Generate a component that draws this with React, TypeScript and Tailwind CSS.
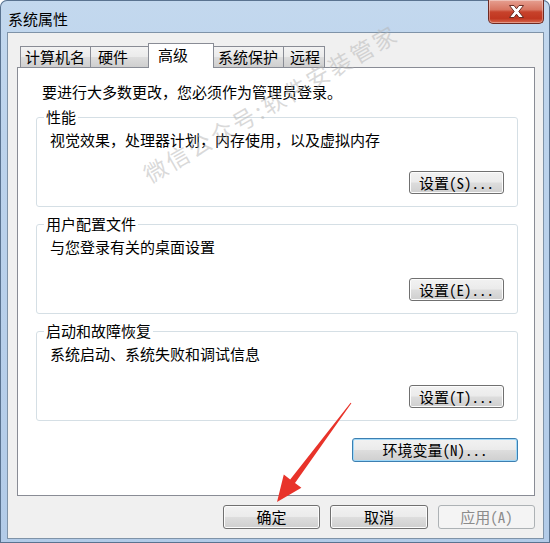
import type { ReactNode } from "react";

const font = "font-['Noto_Sans_Mono_CJK_SC','Noto_Sans_CJK_SC',sans-serif]";

type BtnProps = {
  children: ReactNode;
  className?: string;
  disabled?: boolean;
  focused?: boolean;
};

const WinButton = ({ children, className = "", disabled, focused }: BtnProps) => {
  let look =
    "border-[#707070] bg-[linear-gradient(180deg,#f2f2f2_0%,#ebebeb_48%,#dddddd_52%,#cfcfcf_100%)] shadow-[inset_0_0_0_1px_#fcfcfc] text-black";
  if (focused)
    look =
      "border-[#3c7fb1] bg-[linear-gradient(180deg,#f2f2f2_0%,#ebebeb_48%,#dddddd_52%,#cfcfcf_100%)] shadow-[inset_0_0_0_1px_#9fd8f8] text-black";
  if (disabled) look = "border-[#adb2b5] bg-[#f4f4f4] text-[#8b8b8b]";
  return (
    <button
      type="button"
      className={`flex shrink-0 items-center justify-center rounded-[3px] border text-[15px] leading-[20px] ${look} ${className}`}
    >
      {children}
    </button>
  );
};

type GroupProps = { title: string; desc: string; button: string; className?: string };

const Group = ({ title, desc, button, className = "" }: GroupProps) => (
  <fieldset className={`rounded-[3px] border border-[#d5dfe5] ${className}`}>
    <legend className="ml-[7px] px-[2px] text-[15px] leading-[20px]">{title}</legend>
    <div className="flex h-[79px] flex-col">
      <p className="pl-[13px] pt-[3px] text-[15px] leading-[20px]">{desc}</p>
      <WinButton className="mr-[13px] mt-[21px] h-[23px] w-[95px] self-end">{button}</WinButton>
    </div>
  </fieldset>
);

const tabs = [
  { label: "计算机名", cls: "w-[71px] pl-[4px]" },
  { label: "硬件", cls: "-ml-px w-[59px] pl-[7px]" },
  { label: "高级", cls: "-ml-px w-[66px] pl-[9px]", active: true },
  { label: "系统保护", cls: "-ml-px w-[71px] pl-[4px]" },
  { label: "远程", cls: "-ml-px w-[42px] pl-[6px]" },
];

export default function App() {
  return (
    <div
      className={`relative h-[543px] w-[550px] overflow-hidden rounded-t-[7px] bg-[linear-gradient(180deg,#c3d8ee_0%,#bcd3ec_25%,#b2cbe8_100%)] shadow-[inset_0_0_0_1px_#5a7390] text-black ${font}`}
    >
      {/* title bar */}
      <div className="flex h-[32px] items-start justify-between">
        <div className="pl-[8px] pt-[9px] text-[15px] leading-[20px]">系统属性</div>
        <div className="mr-[6px] flex h-[24px] w-[56px] items-center justify-center rounded-b-[5px] border border-t-0 border-[#6e2a22] bg-[linear-gradient(180deg,#e6a091_0%,#d87561_42%,#c7422b_52%,#c03620_80%,#d7674c_100%)] shadow-[inset_0_0_0_1px_rgba(255,255,255,0.35)]">
          <svg width="17" height="13" viewBox="0 0 17 13">
            <path
              d="M1.5 0.5H6L8.5 3.8L11 0.5H15.5L10.8 6.5L15.5 12.5H11L8.5 9.2L6 12.5H1.5L6.2 6.5Z"
              fill="#ffffff"
              stroke="#5b2119"
              strokeWidth="0.9"
              strokeLinejoin="round"
            />
          </svg>
        </div>
      </div>

      {/* client area */}
      <div className="ml-[7px] mr-[6px] flex h-[507px] flex-col border border-[#7f93a8] bg-[#f0f0f0] pl-[9px] pr-[8px]">
        <div className="ml-[3px] mt-[10px] flex h-[24px] items-end">
          {tabs.map((t) =>
            t.active ? (
              <div
                key={t.label}
                className={`relative z-10 -mb-px h-[25px] border border-b-0 border-[#898c95] bg-white pt-[1px] text-[15px] leading-[20px] ${t.cls}`}
              >
                {t.label}
              </div>
            ) : (
              <div
                key={t.label}
                className={`h-[21px] border border-b-0 border-[#898c95] bg-[linear-gradient(180deg,#f3f3f3_0%,#ebebeb_50%,#dddddd_52%,#cfcfcf_100%)] text-[15px] leading-[20px] ${t.cls}`}
              >
                {t.label}
              </div>
            )
          )}
        </div>

        <div className="flex h-[429px] flex-col border border-[#898c95] bg-white pl-[18px] pr-[16px]">
          <p className="ml-[6px] pt-[14px] text-[15px] leading-[20px]">
            要进行大多数更改，您必须作为管理员登录。
          </p>
          <Group
            className="mt-[5px]"
            title="性能"
            desc="视觉效果，处理器计划，内存使用，以及虚拟内存"
            button="设置(S)..."
          />
          <Group className="mt-[7px]" title="用户配置文件" desc="与您登录有关的桌面设置" button="设置(E)..." />
          <Group
            className="mt-[7px]"
            title="启动和故障恢复"
            desc="系统启动、系统失败和调试信息"
            button="设置(T)..."
          />
          <WinButton focused className="mt-[17px] h-[24px] w-[166px] self-end">
            环境变量(N)...
          </WinButton>
        </div>

        <div className="mt-[9px] flex justify-end gap-[10px]">
          <WinButton className="h-[24px] w-[97px]">确定</WinButton>
          <WinButton className="h-[24px] w-[98px]">取消</WinButton>
          <WinButton disabled className="h-[24px] w-[97px]">
            应用(A)
          </WinButton>
        </div>
      </div>

      {/* watermark + annotation arrow */}
      <svg
        className="pointer-events-none absolute left-0 top-0"
        width="550"
        height="543"
        viewBox="0 0 550 543"
      >
        <text
          x="150"
          y="184"
          transform="rotate(-30 150 184)"
          fontSize="23"
          letterSpacing="2.5"
          fill="#b4b4b4"
          fillOpacity="0.5"
          fontFamily="Noto Sans CJK SC, sans-serif"
        >
          微信公众号:软件安装管家
        </text>
        <polygon
          points="351.4,403.3 295,483 301.4,487.8 277,502 283.8,474.6 290.2,479.4 350.6,402.7"
          fill="#e8332a"
        />
      </svg>
    </div>
  );
}
